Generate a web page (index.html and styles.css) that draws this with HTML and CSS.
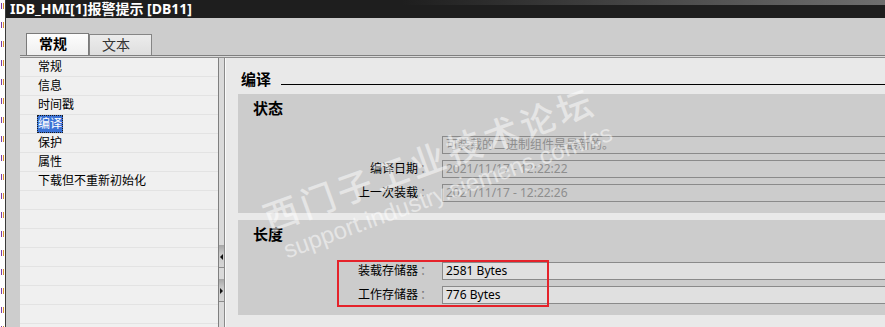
FILE: index.html
```html
<!DOCTYPE html>
<html lang="zh-CN">
<head>
    <meta charset="UTF-8">
    <title>IDB_HMI[1]报警提示 [DB11]</title>
    <link rel="stylesheet" href="styles.css">
</head>
<body>
    <div class="screen">
        <div class="side-strip"></div>
        <div class="window">
            <div class="titlebar">IDB_HMI[1]报警提示 [DB11]</div>
            <div class="window-body">
                <div class="tabs">
                    <div class="tab active">常规</div>
                    <div class="tab">文本</div>
                </div>
                <div class="frame-line"></div>
                <div class="main">
                    <ul class="nav">
                        <li>常规</li>
                        <li>信息</li>
                        <li>时间戳</li>
                        <li><span class="selected">编译</span></li>
                        <li>保护</li>
                        <li>属性</li>
                        <li>下载但不重新初始化</li>
                        <li></li>
                        <li></li>
                        <li></li>
                        <li></li>
                        <li></li>
                        <li></li>
                        <li></li>
                    </ul>
                    <div class="splitter">
                        <span class="split-btn"><i class="arrow-left"></i></span>
                        <span class="split-btn"><i class="arrow-right"></i></span>
                    </div>
                    <div class="content">
                        <div class="content-head">
                            <span class="head-title">编译</span>
                            <span class="head-rule"></span>
                        </div>

                        <div class="group">
                            <div class="group-title">状态</div>
                            <div class="fields">
                                <span class="label"></span>
                                <span class="colon"></span>
                                <span class="field">可装载的二进制组件是最新的。</span>

                                <span class="label">编译日期</span>
                                <span class="colon">：</span>
                                <span class="field">2021/11/17 - 12:22:22</span>

                                <span class="label">上一次装载</span>
                                <span class="colon">：</span>
                                <span class="field">2021/11/17 - 12:22:26</span>
                            </div>
                        </div>

                        <div class="group">
                            <div class="group-title">长度</div>
                            <div class="fields">
                                <span class="label">装载存储器</span>
                                <span class="colon">：</span>
                                <span class="field on">2581 Bytes</span>

                                <span class="label">工作存储器</span>
                                <span class="colon">：</span>
                                <span class="field on">776 Bytes</span>
                            </div>
                            <div class="mark-box"></div>
                        </div>

                        <div class="watermark">
                            <div class="wm-cn">西门子工业技术论坛</div>
                            <div class="wm-url">support.industry.siemens.com/cs</div>
                        </div>
                    </div>
                </div>
            </div>
        </div>
    </div>
</body>
</html>
```

FILE: styles.css
```css
* { margin: 0; padding: 0; box-sizing: border-box; }
body { width: 885px; height: 327px; overflow: hidden; background: #fff; color: #000; font-family: "Noto Sans", "Noto Sans CJK SC", sans-serif; font-size: 12px; }
.screen { display: flex; height: 327px; }

/* bit of the project tree behind the window */
.side-strip { width: 6px; border-right: 1px solid #3a3a3a; background: repeating-linear-gradient(to bottom, #fff 0 3px, transparent 3px 9px, #fff 9px 19px), linear-gradient(to right, #fff 0 1px, #7b3aa6 1px 2px, #fff 2px 3px, #d8962e 3px 4px, #fff 4px); }

.window { flex: 1; display: flex; flex-direction: column; background: #cdcdcd; min-width: 0; }
.titlebar { position: relative; height: 18px; padding-left: 4px; background: #1e1e1e; color: #fff; font-size: 14px; font-weight: bold; line-height: 17px; white-space: nowrap; }
.titlebar::before { content: ""; position: absolute; top: 0; left: 0; right: 0; height: 5px; background: linear-gradient(to right, rgba(120,120,120,0) 45%, rgba(120,120,120,0.9)); }

.window-body { flex: 1; display: flex; flex-direction: column; padding-left: 14px; min-height: 0; }
.tabs { height: 37px; display: flex; align-items: flex-end; padding-left: 6px; }
.tab { height: 21px; width: 63px; padding-left: 12px; border: 1px solid #858585; border-bottom: none; background: linear-gradient(#ececec, #dedede); color: #333; font-size: 14px; line-height: 19px; }
.tab.active { height: 22px; width: 63px; background: linear-gradient(#fdfdfd, #efefef); color: #000; font-weight: bold; border-color: #7a7a7a; }
.frame-line { height: 3px; border-top: 1px solid #7f7f7f; border-bottom: 1px solid #8c8c8c; background: #dadada; }

.main { flex: 1; display: flex; min-height: 0; }
.nav { width: 199px; list-style: none; background: #f0f0f0; border-right: 1px solid #7f7f7f; overflow: hidden; }
.nav li { height: 19px; padding-left: 18px; border-bottom: 1px solid #e3e3e3; line-height: 18px; }
.nav .selected { display: inline-block; margin-left: -1px; height: 18px; border: 1px dotted #1a1a1a; background: #3b72d6; color: #fff; line-height: 16px; }

.splitter { width: 6px; display: flex; flex-direction: column; gap: 11px; padding-top: 187px; background: #dadada; border-right: 1px solid #8a8a8a; }
.split-btn { position: relative; height: 23px; background: linear-gradient(#a6a6a6, #c9c9c9 40%, #d6d6d6); border-bottom: 1px solid #8c8c8c; }
.split-btn i { position: absolute; top: 9px; width: 0; height: 0; border-top: 3px solid transparent; border-bottom: 3px solid transparent; }
.arrow-left { left: 1px; border-right: 3px solid #111; }
.arrow-right { left: 1px; border-left: 3px solid #111; }

.content { position: relative; flex: 1; background: #e9e9e9; border-left: 1px solid #fafafa; overflow: hidden; }
.content-head { display: flex; height: 30px; padding: 12px 0 0 15px; }
.head-title { font-size: 15px; font-weight: bold; line-height: 18px; }
.head-rule { flex: 1; height: 1px; margin: 14px 0 0 10px; background: #000; }

.group { position: relative; margin: 6px 0 0 12px; padding: 5px 0 11px 15px; background: #cccccc; }
.group + .group { margin-top: 7px; }
.group-title { height: 18px; font-size: 15px; font-weight: bold; line-height: 18px; }
.fields { display: grid; grid-template-columns: 165px 24px 1fr; row-gap: 6px; margin-top: 19px; }
.label { text-align: right; line-height: 18px; white-space: nowrap; }
.colon { padding-left: 2px; color: #777; line-height: 18px; }
.field { height: 18px; padding-left: 3px; border: 1px solid #8a8a8a; border-right: none; color: #8e8e8e; line-height: 16px; white-space: nowrap; }
.field.on { background: #e0e0e0; color: #000; }
.mark-box { position: absolute; left: 99px; top: 40px; width: 212px; height: 47px; border: 2px solid #e5222a; }

.watermark { position: absolute; left: 38px; top: 140px; transform: rotate(-20deg); transform-origin: 0 20px; color: rgba(255,255,255,0.5); pointer-events: none; white-space: nowrap; }
.wm-cn { height: 40px; font-family: "Noto Sans CJK SC", sans-serif; font-size: 35px; font-weight: 500; line-height: 40px; letter-spacing: 4px; }
.wm-url { margin: 4px 0 0 8px; font-family: "Liberation Sans", sans-serif; font-size: 24px; line-height: 28px; }
```
